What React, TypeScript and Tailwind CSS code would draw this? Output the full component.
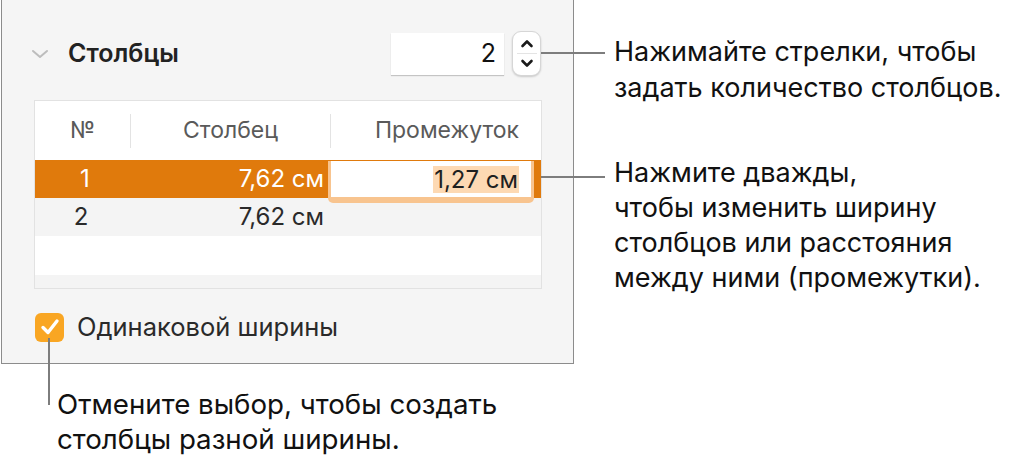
import React from "react";

const font = { fontFamily: 'Inter, "Liberation Sans", Arial, sans-serif' };

const Chevron = ({ up }: { up?: boolean }) => (
  <svg width="14" height="9" viewBox="0 0 14 9" fill="none">
    <path
      d={up ? "M2.5 7 L7 2.5 L11.5 7" : "M2.5 2 L7 6.5 L11.5 2"}
      stroke="#1a1a1a"
      strokeWidth="2.6"
      strokeLinecap="round"
      strokeLinejoin="round"
    />
  </svg>
);

const Stepper = () => (
  <div className="flex h-[45px] w-[29px] flex-col items-center rounded-[9px] border border-[#d6d6d6] bg-white shadow-[0_1px_2px_rgba(0,0,0,0.18)]">
    <div className="flex flex-1 items-center justify-center pt-[2px]">
      <Chevron up />
    </div>
    <div className="h-px w-[20px] bg-[#e4e4e4]" />
    <div className="flex flex-1 items-center justify-center pb-[2px]">
      <Chevron />
    </div>
  </div>
);

const Checkbox = () => (
  <div className="flex h-[29px] w-[29px] items-center justify-center rounded-[6px] bg-[#f9a623]">
    <svg width="22" height="20" viewBox="0 0 22 20" fill="none">
      <path d="M4 10.5 L9 15.5 L18 4" stroke="white" strokeWidth="3.4" strokeLinecap="round" strokeLinejoin="round" />
    </svg>
  </div>
);

const ColumnsTable = () => (
  <div className="ml-[32px] mt-[24px] w-[508px] border border-[#e2e2e2] bg-white text-[24px]">
    <div className="flex h-[59px] items-center text-[23px] text-[#5a5a5a]">
      <div className="w-[95px] text-center">№</div>
      <div className="h-[34px] w-px bg-[#e3e3e3]" />
      <div className="w-[199px] text-center">Столбец</div>
      <div className="h-[34px] w-px bg-[#e3e3e3]" />
      <div className="flex-1 pr-[22px] text-right">Промежуток</div>
    </div>

    <div className="flex h-[38px] items-center bg-[#e07a0c] text-white">
      <div className="w-[100px] text-center">1</div>
      <div className="w-[193px] pr-[4px] text-right">7,62 см</div>
      <div className="relative h-full w-[206px]">
        <div className="absolute inset-x-0 top-[1px] z-10 flex h-[42px] items-center justify-end rounded-b-[5px] border-x-[3px] border-b-[6px] border-[#f8c48f] bg-white pr-[12px] text-[#1f1f1f]">
          <span className="bg-[#fdd9b3] px-[1px] leading-[27px]">1,27 см</span>
        </div>
      </div>
      <div className="h-full flex-1" />
    </div>

    <div className="flex h-[38px] items-center bg-[#f4f4f4] text-[#2a2a2a]">
      <div className="w-[92px] text-center">2</div>
      <div className="w-[201px] pr-[4px] text-right">7,62 см</div>
    </div>
    <div className="h-[39px] bg-white" />
    <div className="h-[13px] bg-[#f4f4f4]" />
  </div>
);

export default function App() {
  return (
    <div className="relative flex h-[460px] w-[1013px] overflow-hidden bg-white" style={font}>
      <div className="w-[574px] shrink-0 pl-px">
        <div className="h-[364px] border-x border-b border-[#8c8c8c] bg-[#f5f5f5] pt-[31px]">
          <div className="flex h-[45px] items-center">
            <svg className="ml-[29px]" width="18" height="10" viewBox="0 0 18 10" fill="none">
              <path d="M2 2 L9 8 L16 2" stroke="#bdbdbd" strokeWidth="2" strokeLinecap="round" strokeLinejoin="round" />
            </svg>
            <div className="ml-[19px] text-[25px] font-semibold text-[#222]">Столбцы</div>
            <div className="ml-auto flex items-center">
              <div className="flex h-[42px] w-[113px] items-center justify-end bg-white pr-[8px] text-[25px] text-[#111] shadow-[0_1px_1px_rgba(0,0,0,0.2)]">
                2
              </div>
              <div className="ml-[8px] mr-[32px]">
                <Stepper />
              </div>
            </div>
          </div>

          <ColumnsTable />

          <div className="ml-[33px] mt-[19px] flex items-center">
            <Checkbox />
            <span className="ml-[13px] text-[25.5px] text-[#2a2a2a]">Одинаковой ширины</span>
          </div>
        </div>

        <div className="ml-[56px] mt-[23px] text-[27.7px] leading-[35px] text-[#111]">
          <div>Отмените выбор, чтобы создать</div>
          <div>столбцы разной ширины.</div>
        </div>
      </div>

      <div className="pl-[40px] pt-[34px] text-[27px] text-[#111]">
        <div className="leading-[36px]">
          <div>Нажимайте стрелки, чтобы</div>
          <div>задать количество столбцов.</div>
        </div>
        <div className="mt-[49px] leading-[35px]">
          <div>Нажмите дважды,</div>
          <div>чтобы изменить ширину</div>
          <div>столбцов или расстояния</div>
          <div>между ними (промежутки).</div>
        </div>
      </div>

      {/* callout leader lines */}
      <div className="absolute left-[541px] top-[52px] h-[2px] w-[64px] bg-[#7d7d7d]" />
      <div className="absolute left-[541px] top-[176px] h-[2px] w-[64px] bg-[#7d7d7d]" />
      <div className="absolute left-[48px] top-[338px] h-[67px] w-[2px] bg-[#7d7d7d]" />
    </div>
  );
}
